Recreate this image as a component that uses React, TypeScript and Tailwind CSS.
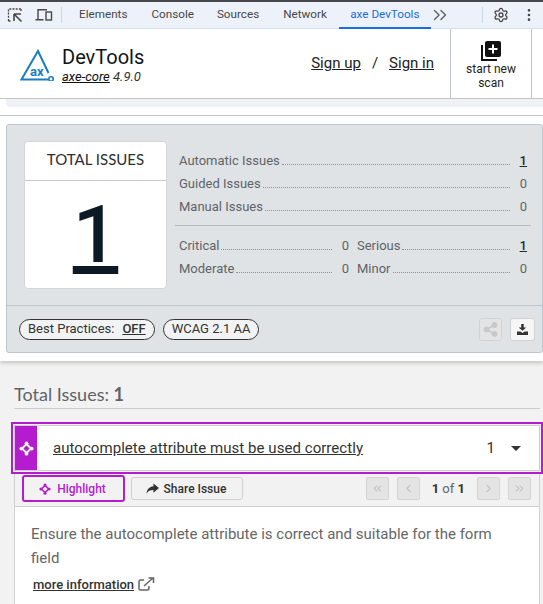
import { ChevronLeft, ChevronRight, ChevronsLeft, ChevronsRight, Settings, EllipsisVertical } from "lucide-react";

function Crosshair({ size = 16, color = "#fff" }: { size?: number; color?: string }) {
  return (
    <svg width={size} height={size} viewBox="0 0 16 16" fill="none">
      <path d="M8 3.2 12.8 8 8 12.8 3.2 8Z" stroke={color} strokeWidth="2" />
      <circle cx="8" cy="2.500" r="2" fill={color} />
      <circle cx="8" cy="13.500" r="2" fill={color} />
      <circle cx="2.500" cy="8" r="2" fill={color} />
      <circle cx="13.500" cy="8" r="2" fill={color} />
    </svg>
  );
}

function DotRow({ label, value, link }: { label: string; value: string; link?: boolean }) {
  return (
    <div className="flex items-baseline text-[13px] leading-[23px] text-[#5f6368]">
      <span>{label}</span>
      <span className="mx-[2px] h-0 flex-1 border-b border-dotted border-[#8a9197]" />
      <span className={link ? "ml-2 font-medium text-[#1f2a33] underline" : "ml-2"}>{value}</span>
    </div>
  );
}

function PageButton({ children }: { children: React.ReactNode }) {
  return (
    <div className="flex h-[23px] w-[23px] items-center justify-center rounded-[2px] border border-[#d4d4d4] bg-[#e4e4e4] text-[#c4c4c4]">
      {children}
    </div>
  );
}

export default function App() {
  return (
    <div className="h-[604px] w-[543px] overflow-hidden bg-[#f2f2f2] font-['Roboto',sans-serif]">
      {/* Devtools tab bar */}
      <div className="flex h-[29px] items-center border-t-2 border-b border-t-[#45474d] border-b-[#d3e3fd] bg-[#edf2fa] text-[11.700px] text-[#474747]">
        <svg width="16" height="16" viewBox="0 0 16 16" fill="none" className="ml-[7px]" stroke="#474747">
          <path d="M1.500 14V2h12.500M14 2v3M1.500 14h3" strokeWidth="1.300" strokeDasharray="2 1.200" />
          <path d="M7 7h7M7 7v7M7.500 7.500l7 7" strokeWidth="1.600" />
        </svg>
        <svg width="18" height="16" viewBox="0 0 18 16" fill="none" className="ml-[12px]" stroke="#474747" strokeWidth="1.400">
          <path d="M3 12V2.700h9M.5 12.800h8" />
          <rect x="11" y="5" width="5.500" height="8" />
        </svg>
        <div className="ml-[8px] h-[16px] w-px bg-[#c7d7ee]" />
        <span className="ml-[17px]">Elements</span>
        <span className="ml-[24px]">Console</span>
        <span className="ml-[23px]">Sources</span>
        <span className="ml-[24px]">Network</span>
        <div className="relative ml-[12px] flex h-full w-[92px] items-center justify-center text-[#1a6ce0]">
          axe DevTools
          <div className="absolute inset-x-0 -bottom-px h-[2px] bg-[#1a6ce0]" />
        </div>
        <ChevronsRight size={22} strokeWidth={1.500} className="-ml-[2px] text-[#5f6368]" />
        <div className="ml-auto flex items-center">
          <div className="mr-[10px] h-[16px] w-px bg-[#c7d7ee]" />
          <Settings size={16} className="mr-[12px] text-[#474747]" />
          <EllipsisVertical size={16} className="mr-[6px] text-[#474747]" />
        </div>
      </div>

      {/* Header */}
      <div className="flex h-[70px] items-stretch border-b border-[#c9c9c9] bg-white">
        <div className="flex flex-1 items-start pl-[20px] pt-[18px]">
          <svg width="34" height="32" viewBox="0 0 34 32" fill="none" className="mt-[2px]">
            <path d="M28.500 24 18 2 1.500 30.500H28" stroke="#1b7cc4" strokeWidth="2" />
            <circle cx="31" cy="30" r="2.200" stroke="#1b7cc4" strokeWidth="1.600" />
            <text x="10" y="27" fontSize="13" fontWeight="700" fill="#1b7cc4" fontFamily="Roboto">ax</text>
          </svg>
          <div className="ml-[8px] -mt-[2px]">
            <div className="text-[20px] leading-[24px] text-[#101418]">DevTools</div>
            <div className="mt-[1px] text-[13px] italic leading-[13px] text-[#333]">
              <span className="text-[#111] underline">axe-core</span> 4.9.0
            </div>
          </div>
        </div>
        <div className="flex items-center text-[15px] text-[#222]">
          <span className="underline">Sign up</span>
          <span className="mx-[11px]">/</span>
          <span className="mr-[16px] underline">Sign in</span>
        </div>
        <div className="mr-[11px] flex w-[82px] flex-col items-center border-x border-[#bcc6cc] pt-[11px] text-center text-[12px] leading-[14px] text-[#222]">
          <svg width="22" height="22" viewBox="0 0 22 22">
            <path d="M1 5v16h16v-2H3V5Z" fill="#111" />
            <rect x="5" y="1" width="16" height="16" rx="2" fill="#111" />
            <path d="M13 4.500v9M8.500 9h9" stroke="#fff" strokeWidth="2" />
          </svg>
          <div>
            start new
            <br />
            scan
          </div>
        </div>
      </div>

      {/* Summary */}
      <div className="bg-white pb-[8px] shadow-[0_2px_4px_rgba(0,0,0,0.2)]">
        <div className="ml-[6px] h-[8px] rounded-bl-[4px] bg-[#f0f1f5]" />
        <div className="h-[9px] border-b border-[#bcc6cc]" />
        <div className="h-[8px]" />
        <div className="ml-[6px] rounded-[3px] border border-[#bcc6cc] bg-[#dfe3e6]">
          <div className="flex h-[180px] pt-[16px] pl-[17px]">
            <div className="h-[148px] w-[143px] rounded-[4px] border border-[#d3d6d8] bg-white">
              <div className="flex h-[39px] items-center justify-center border-b border-[#c8c8c8] pb-[3px] font-['Lato',sans-serif] text-[15px] text-[#2b2f33]">
                TOTAL ISSUES
              </div>
              <div className="text-center text-[80px] font-medium leading-[108px] text-[#0b1a24] underline decoration-[8px] underline-offset-[4px]">
                1
              </div>
            </div>
            <div className="ml-[8px] mr-[11px] flex-1 pt-[8px]">
              <div className="px-[4px]">
                <DotRow label="Automatic Issues" value="1" link />
                <DotRow label="Guided Issues" value="0" />
                <DotRow label="Manual Issues" value="0" />
              </div>
              <div className="mt-[7px] mb-[8px] border-t border-[#b5bcc2]" />
              <div className="grid grid-cols-2 gap-x-[8px] px-[4px]">
                <DotRow label="Critical" value="0" />
                <DotRow label="Serious" value="1" link />
                <DotRow label="Moderate" value="0" />
                <DotRow label="Minor" value="0" />
              </div>
            </div>
          </div>
          <div className="flex h-[47px] items-center border-t border-[#bcc6cc] pl-[12px] pr-[7px] text-[13px] text-[#333]">
            <div className="flex h-[21px] items-center rounded-full border border-[#333] bg-[#f2f3f4] px-[8px]">
              Best Practices:
              <span className="ml-[8px] font-medium underline">OFF</span>
            </div>
            <div className="ml-[8px] flex h-[21px] items-center rounded-full border border-[#333] bg-[#f2f3f4] px-[8px]">
              WCAG 2.1 AA
            </div>
            <div className="ml-auto flex h-[23px] w-[23px] items-center justify-center rounded-[3px] border border-[#d0d3d5] bg-[#e2e4e5]">
              <svg width="15" height="15" viewBox="0 0 15 15" fill="#c6c8ca" stroke="#c6c8ca">
                <path d="M11.500 3 3.500 7.500l8 4.500" fill="none" strokeWidth="1.500" />
                <circle cx="11.500" cy="3" r="2.500" />
                <circle cx="3.500" cy="7.500" r="2.500" />
                <circle cx="11.500" cy="12" r="2.500" />
              </svg>
            </div>
            <div className="ml-[8px] flex h-[23px] w-[25px] items-center justify-center rounded-[3px] border border-[#d0d3d5] bg-[#f6f6f6]">
              <svg width="11" height="11" viewBox="0 0 13 13" fill="#333">
                <path d="M5 0h3v4h3L6.500 8 2 4h3Z" />
                <path d="M0 9h4l2.500 1.500L9 9h4v4H0Z" />
              </svg>
            </div>
          </div>
        </div>
      </div>

      {/* Issues */}
      <div className="pl-[14px] pr-[3px] pt-[21px]">
        <div className="border-b border-[#cdcdcd] pb-[2px] font-['Lato',sans-serif] text-[18px] leading-[24px] text-[#5f6368]">
          Total Issues: <span className="font-bold">1</span>
        </div>
      </div>
      <div className="mt-[13px] ml-[11px] h-[52px] border-[2px] border-[#b51ccf] bg-[#f2f2f2] p-[1px]">
        <div className="flex h-full items-center border border-[#cdcdcd] bg-white">
          <div className="flex h-full w-[22px] items-center justify-center bg-[#b51ccf]">
            <Crosshair size={15} />
          </div>
          <span className="ml-[16px] text-[15px] tracking-[0.05px] text-[#333] underline">
            autocomplete attribute must be used correctly
          </span>
          <span className="ml-auto text-[15px] text-[#333]">1</span>
          <span className="mr-[18px] ml-[16px] h-0 w-0 border-x-[5px] border-t-[5px] border-x-transparent border-t-[#333]" />
        </div>
      </div>
      <div className="ml-[14px] mr-[3px] border-x border-[#d0d0d0]">
        <div className="flex h-[33px] items-center border-b border-[#d0d0d0] pr-[8px] pb-[3px] text-[12px]">
          <div className="ml-[7px] flex h-[27px] w-[103px] items-center justify-center rounded-[3px] border-[2px] border-[#b51ccf] bg-[#f2f2f2] pr-[2px] font-medium text-[#b51ccf]">
            <Crosshair size={12} color="#b51ccf" />
            <span className="ml-[6px]">Highlight</span>
          </div>
          <div className="ml-[6px] flex h-[23px] w-[112px] items-center justify-center rounded-[3px] border border-[#d0d0d0] bg-[#f2f2f2] pr-[2px] font-medium text-[#333]">
            <svg width="13" height="12" viewBox="0 0 14 12" fill="#333">
              <path d="M8 0l6 5-6 5V7C4.500 7 2 8 .5 11 1 6.500 3.500 3.500 8 3Z" />
            </svg>
            <span className="ml-[5px]">Share Issue</span>
          </div>
          <div className="ml-auto flex items-center">
            <PageButton><ChevronsLeft size={13} /></PageButton>
            <div className="ml-[8px]"><PageButton><ChevronLeft size={13} /></PageButton></div>
            <span className="mx-[12px] text-[13px] text-[#5f6368]">
              <b className="font-bold text-[#333]">1</b> of <b className="font-bold text-[#333]">1</b>
            </span>
            <PageButton><ChevronRight size={13} /></PageButton>
            <div className="ml-[8px]"><PageButton><ChevronsRight size={13} /></PageButton></div>
          </div>
        </div>
        <div className="h-[100px] bg-white pl-[16px] pr-[30px] pt-[15px]">
          <p className="text-[15px] leading-[24px] text-[#666]">
            Ensure the autocomplete attribute is correct and suitable for the form field
          </p>
          <div className="mt-[5px] flex items-center pl-[2px] text-[13px] font-medium text-[#333]">
            <span className="underline">more information</span>
            <svg width="17" height="15" viewBox="0 0 17 15" fill="none" stroke="#666" strokeWidth="1.500" className="ml-[4px]">
              <path d="M6 3H2.500A1.500 1.500 0 0 0 1 4.500v7A1.500 1.500 0 0 0 2.500 13h7a1.500 1.500 0 0 0 1.500-1.500V9" />
              <path d="M6 9 15 1M10.500 1H15.500V6" />
            </svg>
          </div>
        </div>
      </div>
    </div>
  );
}
